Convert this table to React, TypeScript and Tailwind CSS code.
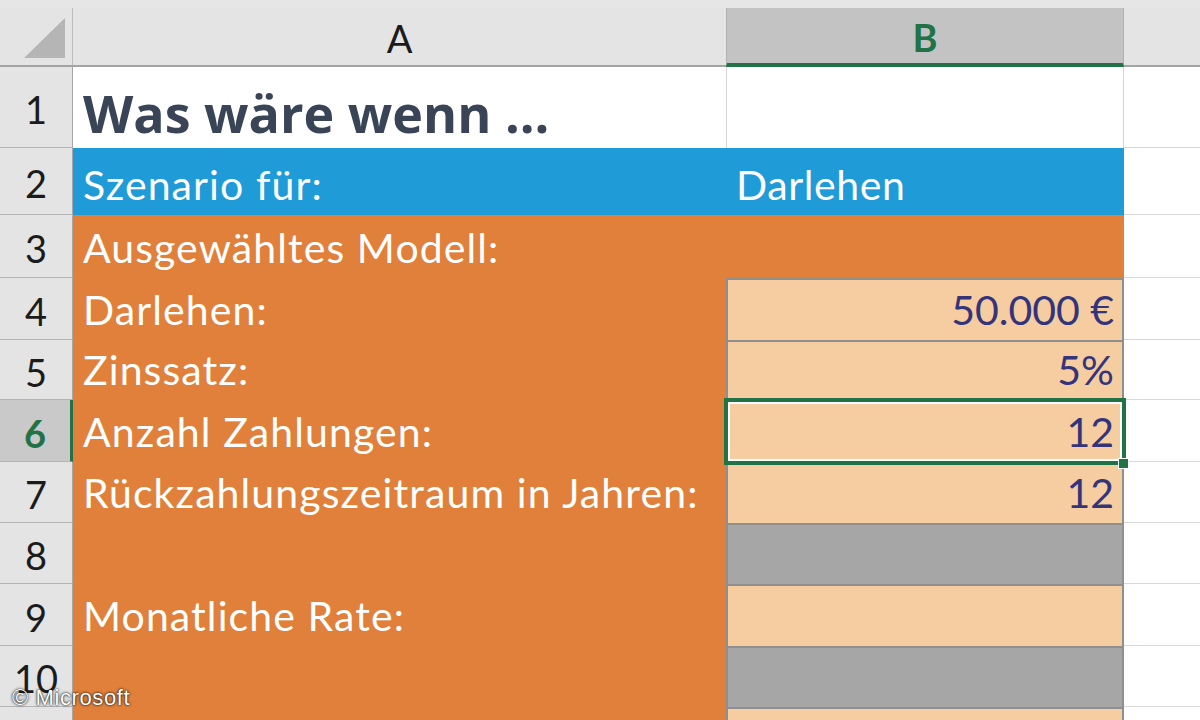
import React from "react";

type Kind = "white" | "blue" | "orange" | "peach" | "gray";

type Row = {
  n: number;
  h: string;
  a: string;
  b: string;
  aKind: Kind;
  bKind: Kind;
  selected?: boolean;
};

const rows: Row[] = [
  { n: 2, h: "h-[67px]", a: "Szenario für:", b: "Darlehen", aKind: "blue", bKind: "blue" },
  { n: 3, h: "h-[63px]", a: "Ausgewähltes Modell:", b: "", aKind: "orange", bKind: "orange" },
  { n: 4, h: "h-[62px]", a: "Darlehen:", b: "50.000 €", aKind: "orange", bKind: "peach" },
  { n: 5, h: "h-[60px]", a: "Zinssatz:", b: "5%", aKind: "orange", bKind: "peach" },
  { n: 6, h: "h-[62px]", a: "Anzahl Zahlungen:", b: "12", aKind: "orange", bKind: "peach", selected: true },
  { n: 7, h: "h-[61px]", a: "Rückzahlungszeitraum in Jahren:", b: "12", aKind: "orange", bKind: "peach" },
  { n: 8, h: "h-[61px]", a: "", b: "", aKind: "orange", bKind: "gray" },
  { n: 9, h: "h-[62px]", a: "Monatliche Rate:", b: "", aKind: "orange", bKind: "peach" },
  { n: 10, h: "h-[61px]", a: "", b: "", aKind: "orange", bKind: "gray" },
  { n: 11, h: "h-[61px]", a: "", b: "", aKind: "orange", bKind: "peach" },
];

const cellB: Record<Kind, string> = {
  white: "bg-white border-x border-[#d4d4d4]",
  blue: "bg-[#1f9bd7] text-white pl-[10px] tracking-[0.6px]",
  orange: "bg-[#e1803a]",
  peach: "bg-[#f5cda0] border-x-2 border-t-2 border-[#8f8f8f] justify-end pr-[8px] text-[#34347a]",
  gray: "bg-[#a6a6a6] border-x-2 border-t-2 border-[#8f8f8f]",
};

const cellA: Record<Kind, string> = {
  white: "bg-white",
  blue: "bg-[#1f9bd7]",
  orange: "bg-[#e1803a]",
  peach: "bg-[#f5cda0]",
  gray: "bg-[#a6a6a6]",
};

const body = "font-['Lato','Liberation_Sans',sans-serif] text-[41px] leading-none";

function RowHeader({ n, selected }: { n: number; selected?: boolean }) {
  return (
    <div
      className={`w-[73px] shrink-0 flex items-center justify-center border-b border-[#b4b4b4] ${
        selected
          ? "bg-[#c9c9c9] border-r-[3px] border-r-[#217346] text-[#217346] font-bold"
          : "bg-[#e4e4e4] border-r border-r-[#a6a6a6] text-[#1b1b1b]"
      } font-['Lato','Liberation_Sans',sans-serif] leading-none text-[38px] pt-[4px]`}
    >
      {n}
    </div>
  );
}

export default function App() {
  return (
    <div className="w-[1200px] h-[720px] overflow-hidden relative bg-white flex flex-col">
      <div className="h-[8px] bg-[#e6e6e6] shrink-0" />
      {/* column header */}
      <div className="h-[59px] shrink-0 flex bg-[#e4e4e4] border-b-2 border-[#a3a3a3]">
        <div className="w-[73px] shrink-0 border-r border-[#bdbdbd] flex items-end justify-end pr-[7px] pb-[7px]">
          <svg width="41" height="40" viewBox="0 0 41 40">
            <polygon points="0,40 41,40 41,0" fill="#b5b5b5" />
          </svg>
        </div>
        <div className="w-[653px] shrink-0 flex items-center justify-center text-[#1b1b1b] font-['Lato','Liberation_Sans',sans-serif] leading-none text-[38px] pt-[2px]">
          A
        </div>
        <div className="w-[398px] shrink-0 flex items-center justify-center bg-[#c3c3c3] border-x border-[#b1b1b1] border-b-[4px] border-b-[#217346] -mb-[2px] text-[#217346] font-bold font-['Lato','Liberation_Sans',sans-serif] leading-none text-[38px] pt-[3px]">
          B
        </div>
        <div className="flex-1" />
      </div>

      {/* row 1 */}
      <div className="h-[81px] shrink-0 flex">
        <RowHeader n={1} />
        <div className="w-[653px] shrink-0 bg-white flex items-end pl-[10px] pb-[6px]">
          <span className="font-['Open_Sans','Liberation_Sans',sans-serif] font-bold text-[52px] leading-none text-[#394557] pb-[3px]">
            Was wäre wenn ...
          </span>
        </div>
        <div className="w-[398px] shrink-0 bg-white border-x border-[#d4d4d4]" />
        <div className="flex-1 border-b border-[#d8d8d8]" />
      </div>

      {rows.map((r) => (
        <div key={r.n} className={`${r.h} shrink-0 flex`}>
          <RowHeader n={r.n} selected={r.selected} />
          <div className={`w-[653px] shrink-0 ${cellA[r.aKind]} flex items-end pl-[10px] pb-[10px] text-white tracking-[1.1px] ${body}`}>
            {r.a}
          </div>
          <div className={`relative w-[398px] shrink-0 flex items-end pb-[10px] ${r.selected ? "z-10" : ""} ${cellB[r.bKind]} ${body}`}>
            {r.b}
            {r.selected && (
              <>
                <div className="absolute -top-[4px] -left-[4px] -right-[4px] -bottom-[3px] border-[4px] border-[#217346] shadow-[inset_0_0_0_2px_#ffffff]" />
                <div className="absolute -right-[7px] -bottom-[7px] w-[11px] h-[11px] bg-[#217346] border border-white" />
              </>
            )}
          </div>
          <div className="flex-1 bg-white border-b border-[#d8d8d8]" />
        </div>
      ))}

      <div className="absolute z-20 left-[12px] top-[687px] font-['Liberation_Sans',Arial,sans-serif] text-[22px] tracking-[0.6px] leading-none text-white [text-shadow:0_0_3px_rgba(0,0,0,0.95),0_0_1px_rgba(0,0,0,0.9)]">
        © Microsoft
      </div>
    </div>
  );
}
